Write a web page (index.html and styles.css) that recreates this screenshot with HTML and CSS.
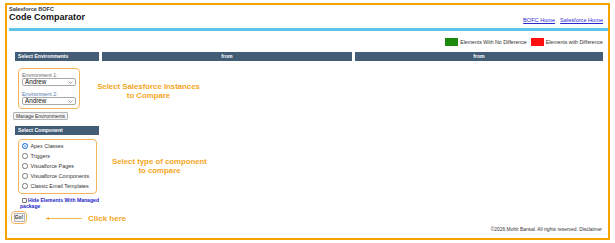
FILE: index.html
```html
<!DOCTYPE html>
<html lang="en">
<head>
    <meta charset="UTF-8">
    <title>Code Comparator</title>
    <link rel="stylesheet" href="styles.css">
</head>
<body>
    <div class="frame">
        <div class="header">
            <div class="brand">
                <div class="brand-small">Salesforce BOFC</div>
                <h1>Code Comparator</h1>
            </div>
            <div class="top-links">
                <a href="#">BOFC Home</a>
                <a href="#">Salesforce Home</a>
            </div>
        </div>
        <div class="blue-bar"></div>

        <div class="legend">
            <span class="swatch green"></span>
            <span>Elements With No Difference</span>
            <span class="swatch red"></span>
            <span>Elements with Difference</span>
        </div>

        <div class="main">
            <div class="sidebar">
                <div class="bar">Select Environments</div>
                <div class="env-box">
                    <label>Environment 1:</label>
                    <div class="select">
                        <span>Andrew</span>
                        <svg width="5" height="3" viewBox="0 0 5 3"><path d="M0.5 0.5 L2.5 2.5 L4.5 0.5" fill="none" stroke="#777" stroke-width="0.7"/></svg>
                    </div>
                    <label class="blue">Environment 2:</label>
                    <div class="select">
                        <span>Andrew</span>
                        <svg width="5" height="3" viewBox="0 0 5 3"><path d="M0.5 0.5 L2.5 2.5 L4.5 0.5" fill="none" stroke="#777" stroke-width="0.7"/></svg>
                    </div>
                </div>
                <button class="btn manage">Manage Environments</button>

                <div class="bar">Select Component</div>
                <div class="comp-box">
                    <div class="radio-row"><span class="radio checked"></span>Apex Classes</div>
                    <div class="radio-row"><span class="radio"></span>Triggers</div>
                    <div class="radio-row"><span class="radio"></span>Visualforce Pages</div>
                    <div class="radio-row"><span class="radio"></span>Visualforce Components</div>
                    <div class="radio-row"><span class="radio"></span>Classic Email Templates</div>
                </div>
                <div class="managed"><span class="checkbox"></span>Hide Elements With Managed package</div>
                <div class="go-box"><button class="btn go">Go!</button></div>
            </div>
            <div class="bar center">from</div>
            <div class="bar center">from</div>
        </div>

        <div class="footer">&copy;2026 Mohit Bansal. All rights reserved. Disclaimer</div>

        <div class="note note-env">Select Salesforce Instances<br>to Compare</div>
        <div class="note note-comp">Select type of component<br>to compare</div>
        <div class="note note-click">
            <svg width="38" height="5" viewBox="0 0 38 5"><path d="M1 2.5 H37" stroke="#f5a623" stroke-width="0.8"/><path d="M1 2.5 L4 1 L4 4 Z" fill="#f5a623"/></svg>
            <span>Click here</span>
        </div>
    </div>
</body>
</html>
```

FILE: styles.css
```css
* {
    margin: 0;
    padding: 0;
    box-sizing: border-box;
}

body {
    background: #ffffff;
    font-family: "Liberation Sans", Arial, sans-serif;
    color: #222;
}

.frame {
    position: relative;
    margin: 3px 0 0 5px;
    width: 605px;
    height: 237px;
    border: 2px solid #f7a300;
    display: flex;
    flex-direction: column;
}

.header {
    display: flex;
    justify-content: space-between;
    align-items: flex-start;
    padding: 1px 5px 0 2px;
}

.brand-small {
    font-size: 5.5px;
    line-height: 6px;
    font-weight: bold;
    color: #333;
}

.header h1 {
    font-size: 9px;
    line-height: 11px;
    font-weight: bold;
    color: #111;
}

.top-links {
    margin-top: 11px;
    display: flex;
    gap: 5px;
}

.top-links a {
    font-size: 5.6px;
    color: #2a2ad0;
    text-decoration: underline;
}

.blue-bar {
    height: 3px;
    margin: 5px 0 0 2px;
    background: #5cc3ea;
}

.legend {
    display: flex;
    justify-content: flex-end;
    align-items: center;
    gap: 2px;
    margin-top: 7px;
    padding-right: 5px;
    font-size: 5.2px;
    color: #333;
}

.swatch {
    width: 13px;
    height: 8px;
}

.swatch.green {
    background: #1c8a0c;
}

.swatch.red {
    background: #ff1010;
    margin-left: 2px;
}

.main {
    display: grid;
    grid-template-columns: 84px 250px 1fr;
    column-gap: 3px;
    align-items: start;
    margin-top: 6px;
    padding: 0 5px 0 8px;
}

.bar {
    height: 9px;
    line-height: 9px;
    background: #435d77;
    color: #ffffff;
    font-size: 5.1px;
    font-weight: bold;
    padding-left: 3px;
}

.bar.center {
    text-align: center;
    padding-left: 0;
}

.env-box {
    margin: 7px 0 0 3px;
    width: 62px;
    border: 1px solid #f7b35a;
    border-radius: 4px;
    padding: 3px 3px 3px;
}

.env-box label {
    display: block;
    font-size: 5.3px;
    line-height: 6px;
    color: #666;
}

.env-box label.blue {
    color: #4f76a8;
    margin-top: 5px;
}

.select {
    position: relative;
    height: 8px;
    border: 1px solid #a9a9a9;
    border-radius: 2px;
    font-size: 6.3px;
    line-height: 6px;
    padding-left: 2px;
    color: #111;
}

.select svg {
    position: absolute;
    right: 2px;
    top: 2px;
}

.btn {
    display: block;
    font-family: "Liberation Sans", Arial, sans-serif;
    font-size: 4.9px;
    color: #333;
    background: #f2f2f2;
    border: 1px solid #b5b5b5;
    border-radius: 1px;
}

.manage {
    margin: 3px 0 6px -2px;
    width: 55px;
    height: 8px;
}

.comp-box {
    margin: 4px 0 0 3px;
    width: 79px;
    border: 1px solid #f7b35a;
    border-radius: 4px;
    padding: 1px 0 2px 3px;
}

.radio-row {
    display: flex;
    align-items: center;
    height: 10px;
    font-size: 5.4px;
    color: #333;
}

.radio {
    width: 5.5px;
    height: 5.5px;
    border: 0.6px solid #777;
    border-radius: 50%;
    margin-right: 3px;
    background: #fff;
}

.radio.checked {
    border-color: #2c7be5;
    background: #2c7be5;
    box-shadow: inset 0 0 0 1.3px #ffffff;
}

.managed {
    margin: 3px 0 0 5px;
    font-size: 5.1px;
    line-height: 6px;
    font-weight: bold;
    color: #2323c8;
}

.checkbox {
    display: inline-block;
    width: 5px;
    height: 5px;
    border: 0.6px solid #777;
    border-radius: 1px;
    margin: 0 1px 0 2px;
    vertical-align: -1px;
}

.go-box {
    margin: 2px 0 0 -4px;
    width: 16px;
    height: 13px;
    border: 1px solid #f7b35a;
    border-radius: 4px;
    display: flex;
    align-items: center;
    justify-content: center;
}

.go {
    width: 11px;
    height: 9px;
    font-size: 4.8px;
    font-weight: bold;
    padding: 0;
}

.footer {
    margin-top: auto;
    margin-bottom: 5px;
    padding-right: 6px;
    text-align: right;
    font-size: 4.9px;
    line-height: 6px;
    color: #333;
}

.note {
    position: absolute;
    color: #f5a623;
    font-weight: bold;
    font-size: 7.8px;
    line-height: 9px;
    text-align: center;
}

.note-env {
    left: 83px;
    top: 77px;
    width: 117px;
}

.note-comp {
    left: 99px;
    top: 152px;
    width: 107px;
}

.note-click {
    left: 38px;
    top: 209px;
    display: flex;
    align-items: center;
    gap: 5px;
    font-size: 8px;
}
```
